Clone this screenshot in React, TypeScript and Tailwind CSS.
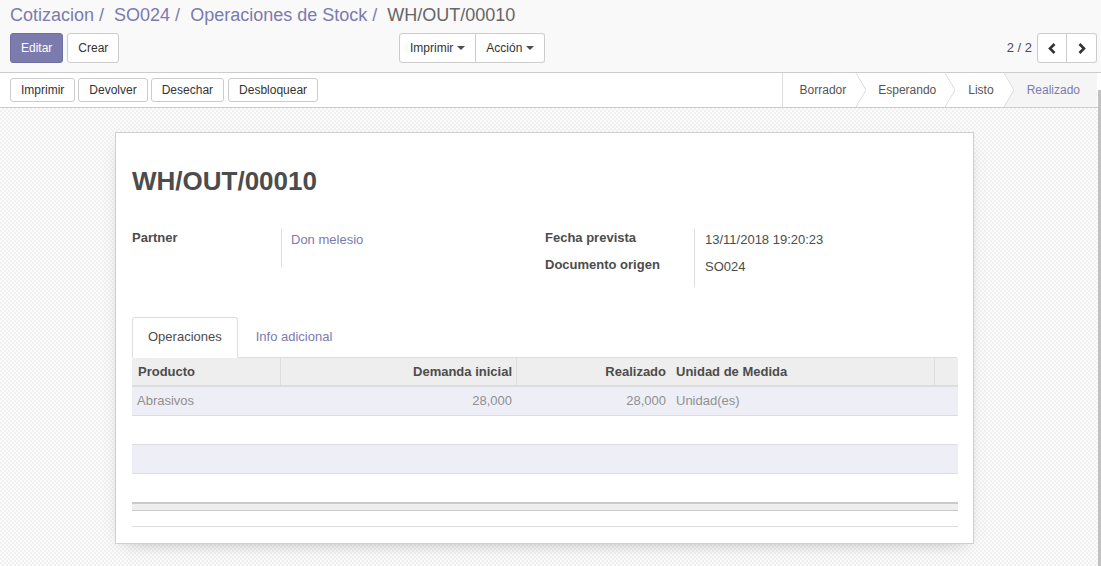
import React from "react";

const font = { fontFamily: '"Liberation Sans", Arial, Helvetica, sans-serif' };

function Caret() {
  return (
    <span className="inline-block ml-[4px] w-0 h-0 border-x-[4px] border-x-transparent border-t-[4px] border-t-[#4c4c4c] align-middle" />
  );
}

function Chevron({ dir }: { dir: "left" | "right" }) {
  return (
    <svg width="10" height="11" viewBox="0 0 10 11">
      {dir === "left" ? (
        <path d="M7.5 1 L3 5.5 L7.5 10" fill="none" stroke="#333" strokeWidth="2.6" strokeLinejoin="miter" />
      ) : (
        <path d="M2.5 1 L7 5.5 L2.5 10" fill="none" stroke="#333" strokeWidth="2.6" strokeLinejoin="miter" />
      )}
    </svg>
  );
}

function StepSep({ fill }: { fill?: boolean }) {
  return (
    <svg width="10" height="34" viewBox="0 0 10 34" className="shrink-0">
      {fill && <polygon points="0,0 10,0 10,34 0,34 10,17" fill="#f5f5f5" />}
      <polyline points="0,0 10,17 0,34" fill="none" stroke="#dcdcdc" strokeWidth="1" />
    </svg>
  );
}

const btn =
  "h-[30px] px-[10px] border border-[#ccc] rounded-[3px] bg-white text-[12px] leading-[18px] text-[#333] flex items-center";
const sbtn =
  "h-[24px] px-[10px] border border-[#ccc] rounded-[3px] bg-white text-[12px] leading-[18px] text-[#333] flex items-center";

export default function App() {
  return (
    <div
      style={font}
      className="relative w-[1101px] h-[566px] overflow-hidden text-[13px] text-[#4c4c4c] bg-[#f7f7f7] bg-[repeating-conic-gradient(#f1f1f1_0%_25%,#fbfbfb_0%_50%)] bg-[length:4px_4px]"
    >
      {/* Control panel */}
      <div className="bg-[#f9f9f9] border-b border-[#ccc] pt-[5px] pb-[9px] pl-[10px] pr-[4px]">
        <div className="flex items-center h-[20px] text-[18px] leading-[20px] whitespace-nowrap">
          <span className="text-[#7c7bad]">Cotizacion</span>
          <span className="ml-[5px] mr-[10px] text-[#7c7bad]">/</span>
          <span className="text-[#7c7bad]">SO024</span>
          <span className="ml-[5px] mr-[10px] text-[#7c7bad]">/</span>
          <span className="text-[#7c7bad]">Operaciones de Stock</span>
          <span className="ml-[5px] mr-[10px] text-[#7c7bad]">/</span>
          <span className="text-[#666]">WH/OUT/00010</span>
        </div>
        <div className="flex items-center mt-[8px] h-[30px]">
          <div className="w-[389px] flex gap-[4px]">
            <button className="h-[30px] px-[10px] border border-[#6f6ea3] rounded-[3px] bg-[#7c7bad] text-[12px] leading-[18px] text-white flex items-center">
              Editar
            </button>
            <button className={btn}>Crear</button>
          </div>
          <div className="flex">
            <button className={btn + " rounded-r-none"}>
              Imprimir
              <Caret />
            </button>
            <button className={btn + " rounded-l-none border-l-0"}>
              Acción
              <Caret />
            </button>
          </div>
          <div className="ml-auto flex items-center">
            <span className="text-[13px] text-[#4c4c4c] mr-[5px]">2 / 2</span>
            <div className="flex">
              <button className="w-[30px] h-[30px] border border-[#ccc] rounded-l-[3px] bg-white flex items-center justify-center">
                <Chevron dir="left" />
              </button>
              <button className="w-[30px] h-[30px] border border-l-0 border-[#ccc] rounded-r-[3px] bg-white flex items-center justify-center">
                <Chevron dir="right" />
              </button>
            </div>
          </div>
        </div>
      </div>

      {/* Status bar */}
      <div className="flex h-[35px] bg-white border-b border-[#ccc] pl-[10px] pr-[4px]">
        <div className="flex items-center gap-[3px]">
          <button className={sbtn}>Imprimir</button>
          <button className={sbtn}>Devolver</button>
          <button className={sbtn}>Desechar</button>
          <button className={sbtn + " ml-[1px]"}>Desbloquear</button>
        </div>
        <div className="ml-auto flex items-stretch border-l border-[#ddd] text-[12px] text-[#555]">
          <div className="flex items-center pl-[17px] pr-[10px]">Borrador</div>
          <StepSep />
          <div className="flex items-center pl-[12px] pr-[9px]">Esperando</div>
          <StepSep />
          <div className="flex items-center pl-[13px] pr-[10px]">Listo</div>
          <StepSep fill />
          <div className="flex items-center pl-[13px] pr-[17px] bg-[#f5f5f5] text-[#7c7bad]">Realizado</div>
        </div>
      </div>

      {/* Sheet */}
      <div className="ml-[115px] mt-[24px] w-[859px] bg-white border border-[#cfcfcf] shadow-[0_6px_18px_-10px_rgba(0,0,0,0.35)] pt-[33px] pl-[16px] pr-[16px] pb-[16px]">
        <h1 className="text-[26px] leading-[30px] font-bold text-[#4c4c4c]">WH/OUT/00010</h1>

        <div className="flex mt-[33px]">
          <div className="w-[413px] flex">
            <div className="w-[150px] h-[38px] border-r border-[#ddd] font-bold leading-[18px]">Partner</div>
            <div className="pl-[9px] pt-[2px] leading-[18px] text-[#7c7bad]">Don melesio</div>
          </div>
          <div className="flex">
            <div className="w-[150px] h-[58px] border-r border-[#ddd] font-bold leading-[18px]">
              <div className="h-[27px]">Fecha prevista</div>
              <div>Documento origen</div>
            </div>
            <div className="pl-[10px] pt-[2px] leading-[18px]">
              <div className="h-[27px]">13/11/2018 19:20:23</div>
              <div>SO024</div>
            </div>
          </div>
        </div>

        {/* Tabs */}
        <div className="mt-[30px] flex gap-[2px] border-b border-[#ddd]">
          <div className="-mb-[1px] px-[15px] py-[10px] leading-[18px] border border-[#ddd] border-b-white bg-white rounded-t-[3px] text-[#4c4c4c]">
            Operaciones
          </div>
          <div className="px-[15px] py-[10px] leading-[18px] border border-transparent text-[#7c7bad]">
            Info adicional
          </div>
        </div>

        {/* Table */}
        <div className="w-[826px]">
          <div className="flex h-[29px] bg-[#eee] border-b-2 border-[#ddd] font-bold items-stretch">
            <div className="w-[149px] border-r border-[#ddd] pl-[6px] flex items-center">Producto</div>
            <div className="w-[236px] border-r border-[#ddd] pr-[4px] flex items-center justify-end">Demanda inicial</div>
            <div className="w-[154px] pr-[5px] flex items-center justify-end">Realizado</div>
            <div className="w-[264px] border-r border-[#ddd] pl-[5px] flex items-center">Unidad de Medida</div>
            <div className="flex-1" />
          </div>
          <div className="flex h-[29px] bg-[#eeeef6] border-b border-[#ddd] items-center text-[#909090]">
            <div className="w-[149px] pl-[5px]">Abrasivos</div>
            <div className="w-[236px] pr-[5px] text-right">28,000</div>
            <div className="w-[154px] pr-[5px] text-right">28,000</div>
            <div className="w-[264px] pl-[5px]">Unidad(es)</div>
            <div className="flex-1" />
          </div>
          <div className="h-[29px] bg-white border-b border-[#ddd]" />
          <div className="h-[29px] bg-[#eeeef6] border-b border-[#ddd]" />
          <div className="h-[28px] bg-white" />
          <div className="h-[9px] bg-[#eee] border-t-2 border-b border-[#cacaca]" />
          <div className="h-[16px] border-b border-[#ddd]" />
        </div>
      </div>

      {/* scrollbar thumb */}
      <div className="absolute right-0 top-[90px] bottom-0 w-[3px] bg-[#c1c1c1]" />
    </div>
  );
}
